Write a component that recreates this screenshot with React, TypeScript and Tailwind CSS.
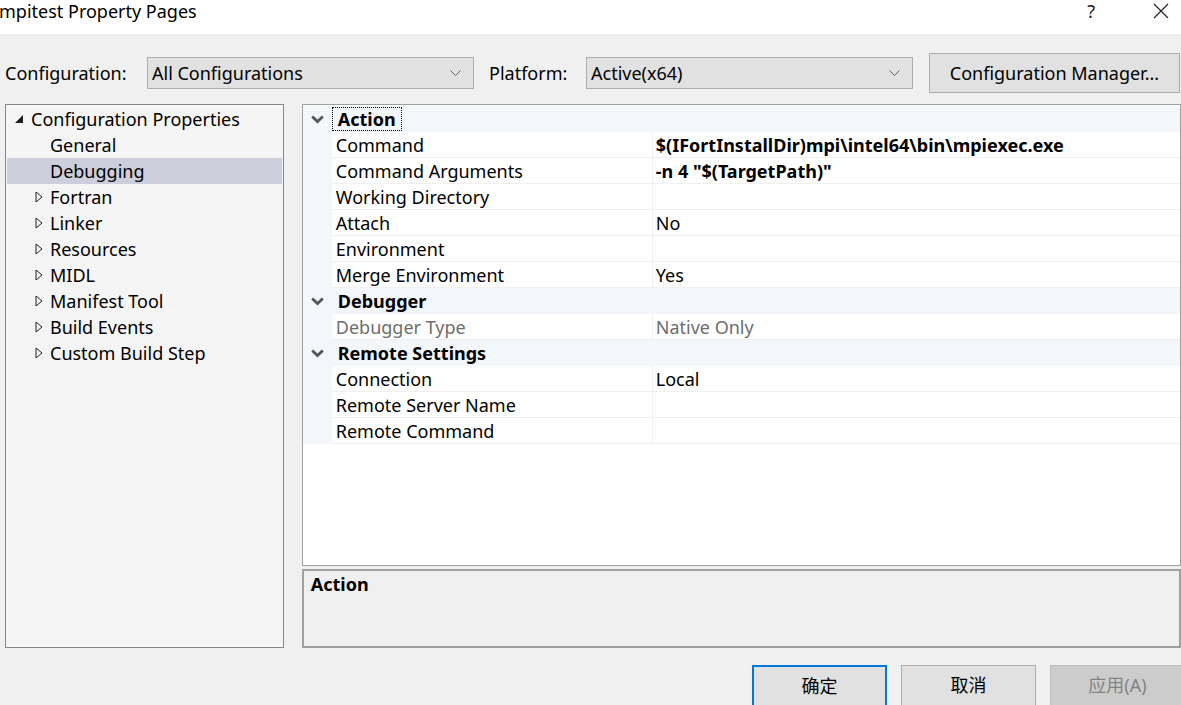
import React from "react";

const font = { fontFamily: '"Segoe UI", "Noto Sans", "Noto Sans CJK SC", sans-serif' };

type Row = { name: string; value?: string; bold?: boolean; dim?: boolean };
type Group = { title: string; rows: Row[]; focus?: boolean };

const groups: Group[] = [
  {
    title: "Action",
    focus: true,
    rows: [
      { name: "Command", value: "$(IFortInstallDir)mpi\\intel64\\bin\\mpiexec.exe", bold: true },
      { name: "Command Arguments", value: '-n 4 "$(TargetPath)"', bold: true },
      { name: "Working Directory" },
      { name: "Attach", value: "No" },
      { name: "Environment" },
      { name: "Merge Environment", value: "Yes" },
    ],
  },
  {
    title: "Debugger",
    rows: [{ name: "Debugger Type", value: "Native Only", dim: true }],
  },
  {
    title: "Remote Settings",
    rows: [
      { name: "Connection", value: "Local" },
      { name: "Remote Server Name" },
      { name: "Remote Command" },
    ],
  },
];

const treeItems = [
  { label: "General", kids: false },
  { label: "Debugging", kids: false, selected: true },
  { label: "Fortran", kids: true },
  { label: "Linker", kids: true },
  { label: "Resources", kids: true },
  { label: "MIDL", kids: true },
  { label: "Manifest Tool", kids: true },
  { label: "Build Events", kids: true },
  { label: "Custom Build Step", kids: true },
];

function Chevron() {
  return (
    <svg width="13" height="9" viewBox="0 0 13 9">
      <polyline points="1.2,1.5 6.5,6.5 11.8,1.5" fill="none" stroke="currentColor" strokeWidth="2.8" />
    </svg>
  );
}

function Dropdown({ value, width }: { value: string; width: string }) {
  return (
    <div className={`${width} h-[32px] flex items-center justify-between border border-[#adadad] bg-[#e1e1e1] pl-[4px] pr-[12px] text-[18px] text-black`}>
      <span>{value}</span>
      <svg width="11" height="7" viewBox="0 0 11 7">
        <polyline points="0.5,0.5 5.5,5.5 10.5,0.5" fill="none" stroke="#606060" strokeWidth="1" />
      </svg>
    </div>
  );
}

function Button({ label, kind }: { label: string; kind?: "default" | "disabled" }) {
  const cls =
    kind === "default"
      ? "border-2 border-[#0078d7] bg-[#e1e1e1] text-black"
      : kind === "disabled"
      ? "border border-[#bfbfbf] bg-[#cccccc] text-[#838383]"
      : "border border-[#adadad] bg-[#e1e1e1] text-black";
  return (
    <div className={`w-[135px] h-[44px] shrink-0 flex items-start justify-center pt-[10px] text-[18px] ${cls}`}>
      {label}
    </div>
  );
}

export default function App() {
  return (
    <div style={font} className="w-[1181px] h-[705px] overflow-hidden bg-[#f0f0f0] flex flex-col text-[#000] leading-none">
      {/* title bar */}
      <div className="h-[34px] shrink-0 bg-white flex items-center justify-between pr-[12px]">
        <span className="text-[18px] -ml-[1px] -mt-[12px]">mpitest Property Pages</span>
        <div className="flex items-center gap-[58px] -mt-[12px]">
          <span className="text-[18px] text-[#222]">?</span>
          <svg width="16" height="16" viewBox="0 0 16 16">
            <path d="M1 1 L15 15 M15 1 L1 15" stroke="#222" strokeWidth="1.2" />
          </svg>
        </div>
      </div>

      {/* toolbar */}
      <div className="h-[70px] shrink-0 flex items-center pl-[5px] pt-[8px] text-[18px]">
        <span className="w-[142px]">Configuration:</span>
        <Dropdown value="All Configurations" width="w-[327px]" />
        <span className="ml-[15px] w-[97px]">Platform:</span>
        <Dropdown value="Active(x64)" width="w-[327px]" />
        <div className="ml-[16px] w-[251px] h-[40px] flex items-center justify-center border border-[#adadad] bg-[#e1e1e1]">
          Configuration Manager...
        </div>
      </div>

      {/* main */}
      <div className="h-[544px] shrink-0 flex pl-[5px] gap-[18px] text-[18px]">
        {/* tree */}
        <div className="w-[279px] border border-[#828790] bg-[#f5f5f5] pt-[1px] px-[1px]">
          <div className="h-[26px] flex items-center">
            <svg width="10" height="10" viewBox="0 0 10 10" className="ml-[7px] mr-[7px]">
              <polygon points="9,1 9,9 1,9" fill="#1e1e1e" />
            </svg>
            <span>Configuration Properties</span>
          </div>
          {treeItems.map((t) => (
            <div key={t.label} className={`h-[26px] flex items-center ${t.selected ? "bg-[#cccedb]" : ""}`}>
              <span className="w-[43px] shrink-0 flex justify-end pr-[7px]">
                {t.kids && (
                  <svg width="8" height="12" viewBox="0 0 8 12">
                    <polygon points="1,1 7,6 1,11" fill="none" stroke="#1e1e1e" strokeWidth="1" />
                  </svg>
                )}
              </span>
              <span>{t.label}</span>
            </div>
          ))}
        </div>

        {/* right column */}
        <div className="w-[880px] flex flex-col gap-[3px]">
          <div className="h-[462px] border border-[#a0a0a0] bg-white pt-[1px]">
            {groups.map((g) => (
              <div key={g.title}>
                <div className="h-[26px] flex items-center bg-[#f3f6fb]">
                  <span className="w-[29px] shrink-0 flex justify-center text-[#555]">
                    <Chevron />
                  </span>
                  <span
                    className={`h-[24px] flex items-center font-bold px-[5px] ${g.focus ? "border border-dotted border-black" : "border border-transparent"}`}
                  >
                    {g.title}
                  </span>
                </div>
                {g.rows.map((r) => (
                  <div key={r.name} className="h-[26px] flex bg-[#f3f6fb]">
                    <div className="w-[29px] shrink-0" />
                    <div
                      className={`w-[321px] shrink-0 flex items-center pl-[4px] bg-white border-b border-r border-[#f0f0f0] ${r.dim ? "text-[#6d6d6d]" : ""}`}
                    >
                      {r.name}
                    </div>
                    <div
                      className={`flex-1 flex items-center pl-[3px] bg-white border-b border-[#f0f0f0] ${r.bold ? "font-bold" : ""} ${r.dim ? "text-[#6d6d6d]" : ""}`}
                    >
                      {r.value}
                    </div>
                  </div>
                ))}
              </div>
            ))}
          </div>
          <div className="h-[79px] border-2 border-[#a0a0a0] bg-[#f0f0f0] pl-[7px] pt-[4px]">
            <span className="font-bold">Action</span>
          </div>
        </div>
      </div>

      {/* buttons */}
      <div className="flex gap-[14px] pl-[752px] pt-[17px]">
        <Button label="确定" kind="default" />
        <Button label="取消" />
        <Button label="应用(A)" kind="disabled" />
      </div>
    </div>
  );
}
